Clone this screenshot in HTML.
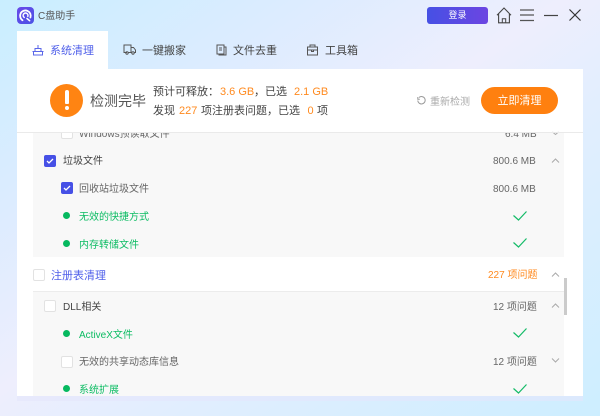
<!DOCTYPE html>
<html lang="zh-CN">
<head>
<meta charset="utf-8">
<title>C盘助手</title>
<style>
html,body{margin:0;padding:0}
body{width:600px;height:416px;overflow:hidden;position:relative;font-family:"Liberation Sans","Noto Sans CJK SC",sans-serif;color:#444;background:linear-gradient(to bottom right,#c9eeff 0%,#dcecff 25%,#eeeefd 47%,#e2eefe 62%,#cdeeff 100%)}
.a{position:absolute;white-space:nowrap}
.t{line-height:16px;font-size:10px}
.h{font-size:11px;line-height:16px;color:#444}
.g{color:#0cbc63}
.o{color:#ff8a1f}
.m{color:#666}
.cb{position:absolute;width:10px;height:10px;border:1px solid #e2e2e2;border-radius:2px;background:#fff}
.cb.on{background:#4650e6;border-color:#4650e6;width:12px;height:12px;border:0}
.cb.on svg{position:absolute;left:2px;top:2px}
.dot{position:absolute;width:7px;height:7px;border-radius:50%;background:#06b95f}
svg{position:absolute;overflow:visible}
</style>
</head>
<body>
<div class="a" style="left:17px;top:396px;width:566px;height:5px;background:#e4e6fb;opacity:.6"></div>

<!-- logo -->
<div class="a" style="left:17px;top:7px;width:17px;height:17px;border-radius:4px;background:linear-gradient(135deg,#6a49e8,#4a53e6)"></div>
<svg style="left:17px;top:7px" width="17" height="17" viewBox="0 0 17 17" fill="none"><path d="M5.5 13.2A5.3 5.3 0 1 1 13.4 10.5" stroke="#fff" stroke-width="1.8" stroke-linecap="round"/><path d="M7.2 10.4A2.4 2.4 0 1 1 10.8 9.3" stroke="#fff" stroke-width="1.5" stroke-linecap="round"/><path d="M10 11.5l2.6 2.2" stroke="#fff" stroke-width="1.6" stroke-linecap="round"/></svg>
<div class="a t" style="left:38px;top:9px;color:#555">C盘助手</div>

<!-- top right -->
<div class="a" style="left:427px;top:7px;width:61px;height:17px;border-radius:3px;background:linear-gradient(90deg,#4650e4,#6c45e2);color:#fff;font-size:9px;line-height:17px;text-align:center">登录</div>
<svg style="left:496px;top:7px" width="16" height="17" viewBox="0 0 16 17" fill="none" stroke="#444" stroke-width="1.1"><path d="M1 8.2L8 1l7 7.2M2.6 7v8.8h10.8V7"/><path d="M6.3 15.8v-4h3.4v4" stroke-width="1"/></svg>
<svg style="left:520px;top:9px" width="14" height="13" viewBox="0 0 14 13" fill="none" stroke="#555" stroke-width="1.2"><path d="M0 1h14M0 6h14M0 11.5h14"/></svg>
<svg style="left:544px;top:14px" width="14" height="3" viewBox="0 0 14 3" fill="none" stroke="#444" stroke-width="1.2"><path d="M0 1.5h14"/></svg>
<svg style="left:569px;top:9px" width="12" height="12" viewBox="0 0 12 12" fill="none" stroke="#333" stroke-width="1.2"><path d="M.5.5l11 11M11.5.5l-11 11"/></svg>

<!-- tabs -->
<div class="a" style="left:17px;top:31px;width:91px;height:38px;background:#fff"></div>
<svg style="left:32px;top:44px" width="12" height="12" viewBox="0 0 12 12" fill="none" stroke="#5a66e8" stroke-width="1"><path d="M6 1v3M3 4.5h6v3H3zM.5 7.5h2M9.5 7.5h2M1 11h10M1.500 8v3M10.500 8v3"/></svg>
<div class="a" style="left:50px;top:43px;font-size:11px;line-height:16px;color:#5060ea">系统清理</div>
<svg style="left:123px;top:44px" width="13" height="11" viewBox="0 0 13 11" fill="none" stroke="#555" stroke-width="1"><path d="M4 8.500H1V1h7v7.500H5.500M8 3.500h2.500L12.500 6v2.500h-1M8 8.500h1"/><circle cx="4" cy="9" r="1.200"/><circle cx="10" cy="9" r="1.200"/></svg>
<div class="a h" style="left:142px;top:43px">一键搬家</div>
<svg style="left:216px;top:44px" width="11" height="12" viewBox="0 0 11 12" fill="none" stroke="#555" stroke-width="1"><path d="M1 1h7v9H1zM8 3h2v8H3v-1M3 4h3M3 6h3"/></svg>
<div class="a h" style="left:233px;top:43px">文件去重</div>
<svg style="left:307px;top:44px" width="11" height="12" viewBox="0 0 11 12" fill="none" stroke="#555" stroke-width="1"><path d="M.5 3h10v8H.500zM3 3V1h5v2M.5 6h10M4.500 6v1.500h2V6"/></svg>
<div class="a h" style="left:325px;top:43px">工具箱</div>

<!-- main panel -->
<div class="a" style="left:17px;top:69px;width:566px;height:327px;background:#fff"></div>

<!-- grey group 1 + clipped row -->
<div class="a" style="left:33px;top:132px;width:531px;height:125px;background:#f8f8f8"></div>
<div class="cb" style="left:61px;top:127px;clip-path:inset(5px -1px -1px -1px)"></div>
<div class="a t" style="left:79px;top:127px;color:#666;clip-path:inset(5px 0 0 0)">Windows预读取文件</div>
<div class="a t m" style="left:505px;top:127px;clip-path:inset(5px 0 0 0)">6.4 MB</div>
<svg style="left:552px;top:132px" width="7" height="3" viewBox="0 0 7 3" fill="none" stroke="#aaa"><path d="M.5 0l3 2.500 3-2.500"/></svg>
<div class="a" style="left:17px;top:132px;width:566px;height:1px;background:#eaeaea"></div>

<!-- header -->
<div class="a" style="left:50px;top:84px;width:33px;height:33px;border-radius:50%;background:#ff8412"></div>
<div class="a" style="left:64.500px;top:90px;width:4px;height:14px;border-radius:2px 2px 1px 1px;background:#fff"></div>
<div class="a" style="left:64.500px;top:106px;width:4px;height:4px;border-radius:50%;background:#fff"></div>
<div class="a" style="left:90px;top:91px;font-size:14px;line-height:20px;color:#555">检测完毕</div>

<div class="a h" style="left:153px;top:83.500px">预计可释放：</div>
<div class="a h" style="left:220px;top:83.500px;color:#ff8a1f">3.6 GB</div>
<div class="a h" style="left:254px;top:83.500px">，已选</div>
<div class="a h" style="left:294px;top:83.500px;color:#ff8a1f">2.1 GB</div>
<div class="a h" style="left:153px;top:102.500px">发现</div>
<div class="a h" style="left:179px;top:102.500px;color:#ff8a1f">227</div>
<div class="a h" style="left:201px;top:102.500px">项注册表问题，已选</div>
<div class="a h" style="left:307.500px;top:102.500px;color:#ff8a1f">0</div>
<div class="a h" style="left:317px;top:102.500px">项</div>

<svg style="left:417px;top:96px" width="9" height="9" viewBox="0 0 9 9" fill="none" stroke="#999" stroke-width="1"><path d="M2 1.500A3.700 3.700 0 1 1 .800 4.500M.800 1v2.200h2"/></svg>
<div class="a t" style="left:430px;top:94.500px;color:#aaa">重新检测</div>
<div class="a" style="left:481px;top:87px;width:77px;height:27px;border-radius:14px;background:#ff800f;color:#fff;font-size:11px;line-height:28px;text-align:center">立即清理</div>

<!-- group 1 rows -->
<div class="cb on" style="left:44px;top:155px"><svg width="8" height="8" viewBox="0 0 8 8" fill="none" stroke="#fff" stroke-width="1.300"><path d="M1 4l2 2 4-4"/></svg></div>
<div class="a t" style="left:63px;top:154px;color:#444">垃圾文件</div>
<div class="a t m" style="left:493px;top:154px">800.6 MB</div>
<svg style="left:551px;top:158px" width="9" height="5" viewBox="0 0 9 5" fill="none" stroke="#aaa"><path d="M1 4.500l3.500-3.500 3.500 3.500"/></svg>

<div class="cb on" style="left:61px;top:182px"><svg width="8" height="8" viewBox="0 0 8 8" fill="none" stroke="#fff" stroke-width="1.300"><path d="M1 4l2 2 4-4"/></svg></div>
<div class="a t m" style="left:79px;top:182px">回收站垃圾文件</div>
<div class="a t m" style="left:493px;top:182px">800.6 MB</div>

<div class="dot" style="left:63px;top:212px"></div>
<div class="a t g" style="left:79px;top:209.500px">无效的快捷方式</div>
<svg style="left:513px;top:211px" width="14" height="10" viewBox="0 0 14 10" fill="none" stroke="#14bb68" stroke-width="1.200"><path d="M.5 4.500l5 4.500 8-8.500"/></svg>

<div class="dot" style="left:63px;top:240px"></div>
<div class="a t g" style="left:79px;top:237.500px">内存转储文件</div>
<svg style="left:513px;top:238px" width="14" height="10" viewBox="0 0 14 10" fill="none" stroke="#14bb68" stroke-width="1.200"><path d="M.5 4.500l5 4.500 8-8.500"/></svg>

<!-- registry row -->
<div class="cb" style="left:33px;top:269px"></div>
<div class="a" style="left:51px;top:268px;font-size:11px;line-height:16px;color:#5060ea">注册表清理</div>
<div class="a t o" style="left:488px;top:268px">227 项问题</div>
<svg style="left:551px;top:272px" width="9" height="5" viewBox="0 0 9 5" fill="none" stroke="#aaa"><path d="M1 4.500l3.500-3.500 3.500 3.500"/></svg>

<!-- grey group 2 -->
<div class="a" style="left:33px;top:291px;width:531px;height:105px;background:#f8f8f8;border-top:1px solid #ececec;box-sizing:border-box"></div>
<div class="cb" style="left:44px;top:300px"></div>
<div class="a t" style="left:63px;top:299.500px;color:#444">DLL相关</div>
<div class="a t m" style="left:493px;top:299.500px">12 项问题</div>
<svg style="left:551px;top:303px" width="9" height="5" viewBox="0 0 9 5" fill="none" stroke="#aaa"><path d="M1 4.500l3.500-3.500 3.500 3.500"/></svg>

<div class="dot" style="left:63px;top:330px"></div>
<div class="a t g" style="left:79px;top:327.500px">ActiveX文件</div>
<svg style="left:513px;top:328px" width="14" height="10" viewBox="0 0 14 10" fill="none" stroke="#14bb68" stroke-width="1.200"><path d="M.5 4.500l5 4.500 8-8.500"/></svg>

<div class="cb" style="left:61px;top:356px"></div>
<div class="a t m" style="left:79px;top:355px">无效的共享动态库信息</div>
<div class="a t m" style="left:493px;top:355px">12 项问题</div>
<svg style="left:551px;top:358px" width="9" height="5" viewBox="0 0 9 5" fill="none" stroke="#aaa"><path d="M1 .500l3.500 3.500 3.500-3.500"/></svg>

<div class="dot" style="left:63px;top:385px"></div>
<div class="a t g" style="left:79px;top:382.500px">系统扩展</div>
<svg style="left:513px;top:384px" width="14" height="10" viewBox="0 0 14 10" fill="none" stroke="#14bb68" stroke-width="1.200"><path d="M.5 4.500l5 4.500 8-8.500"/></svg>

<!-- scrollbar -->
<div class="a" style="left:564px;top:278px;width:3px;height:37px;background:#cbcbcb"></div>
</body>
</html>
